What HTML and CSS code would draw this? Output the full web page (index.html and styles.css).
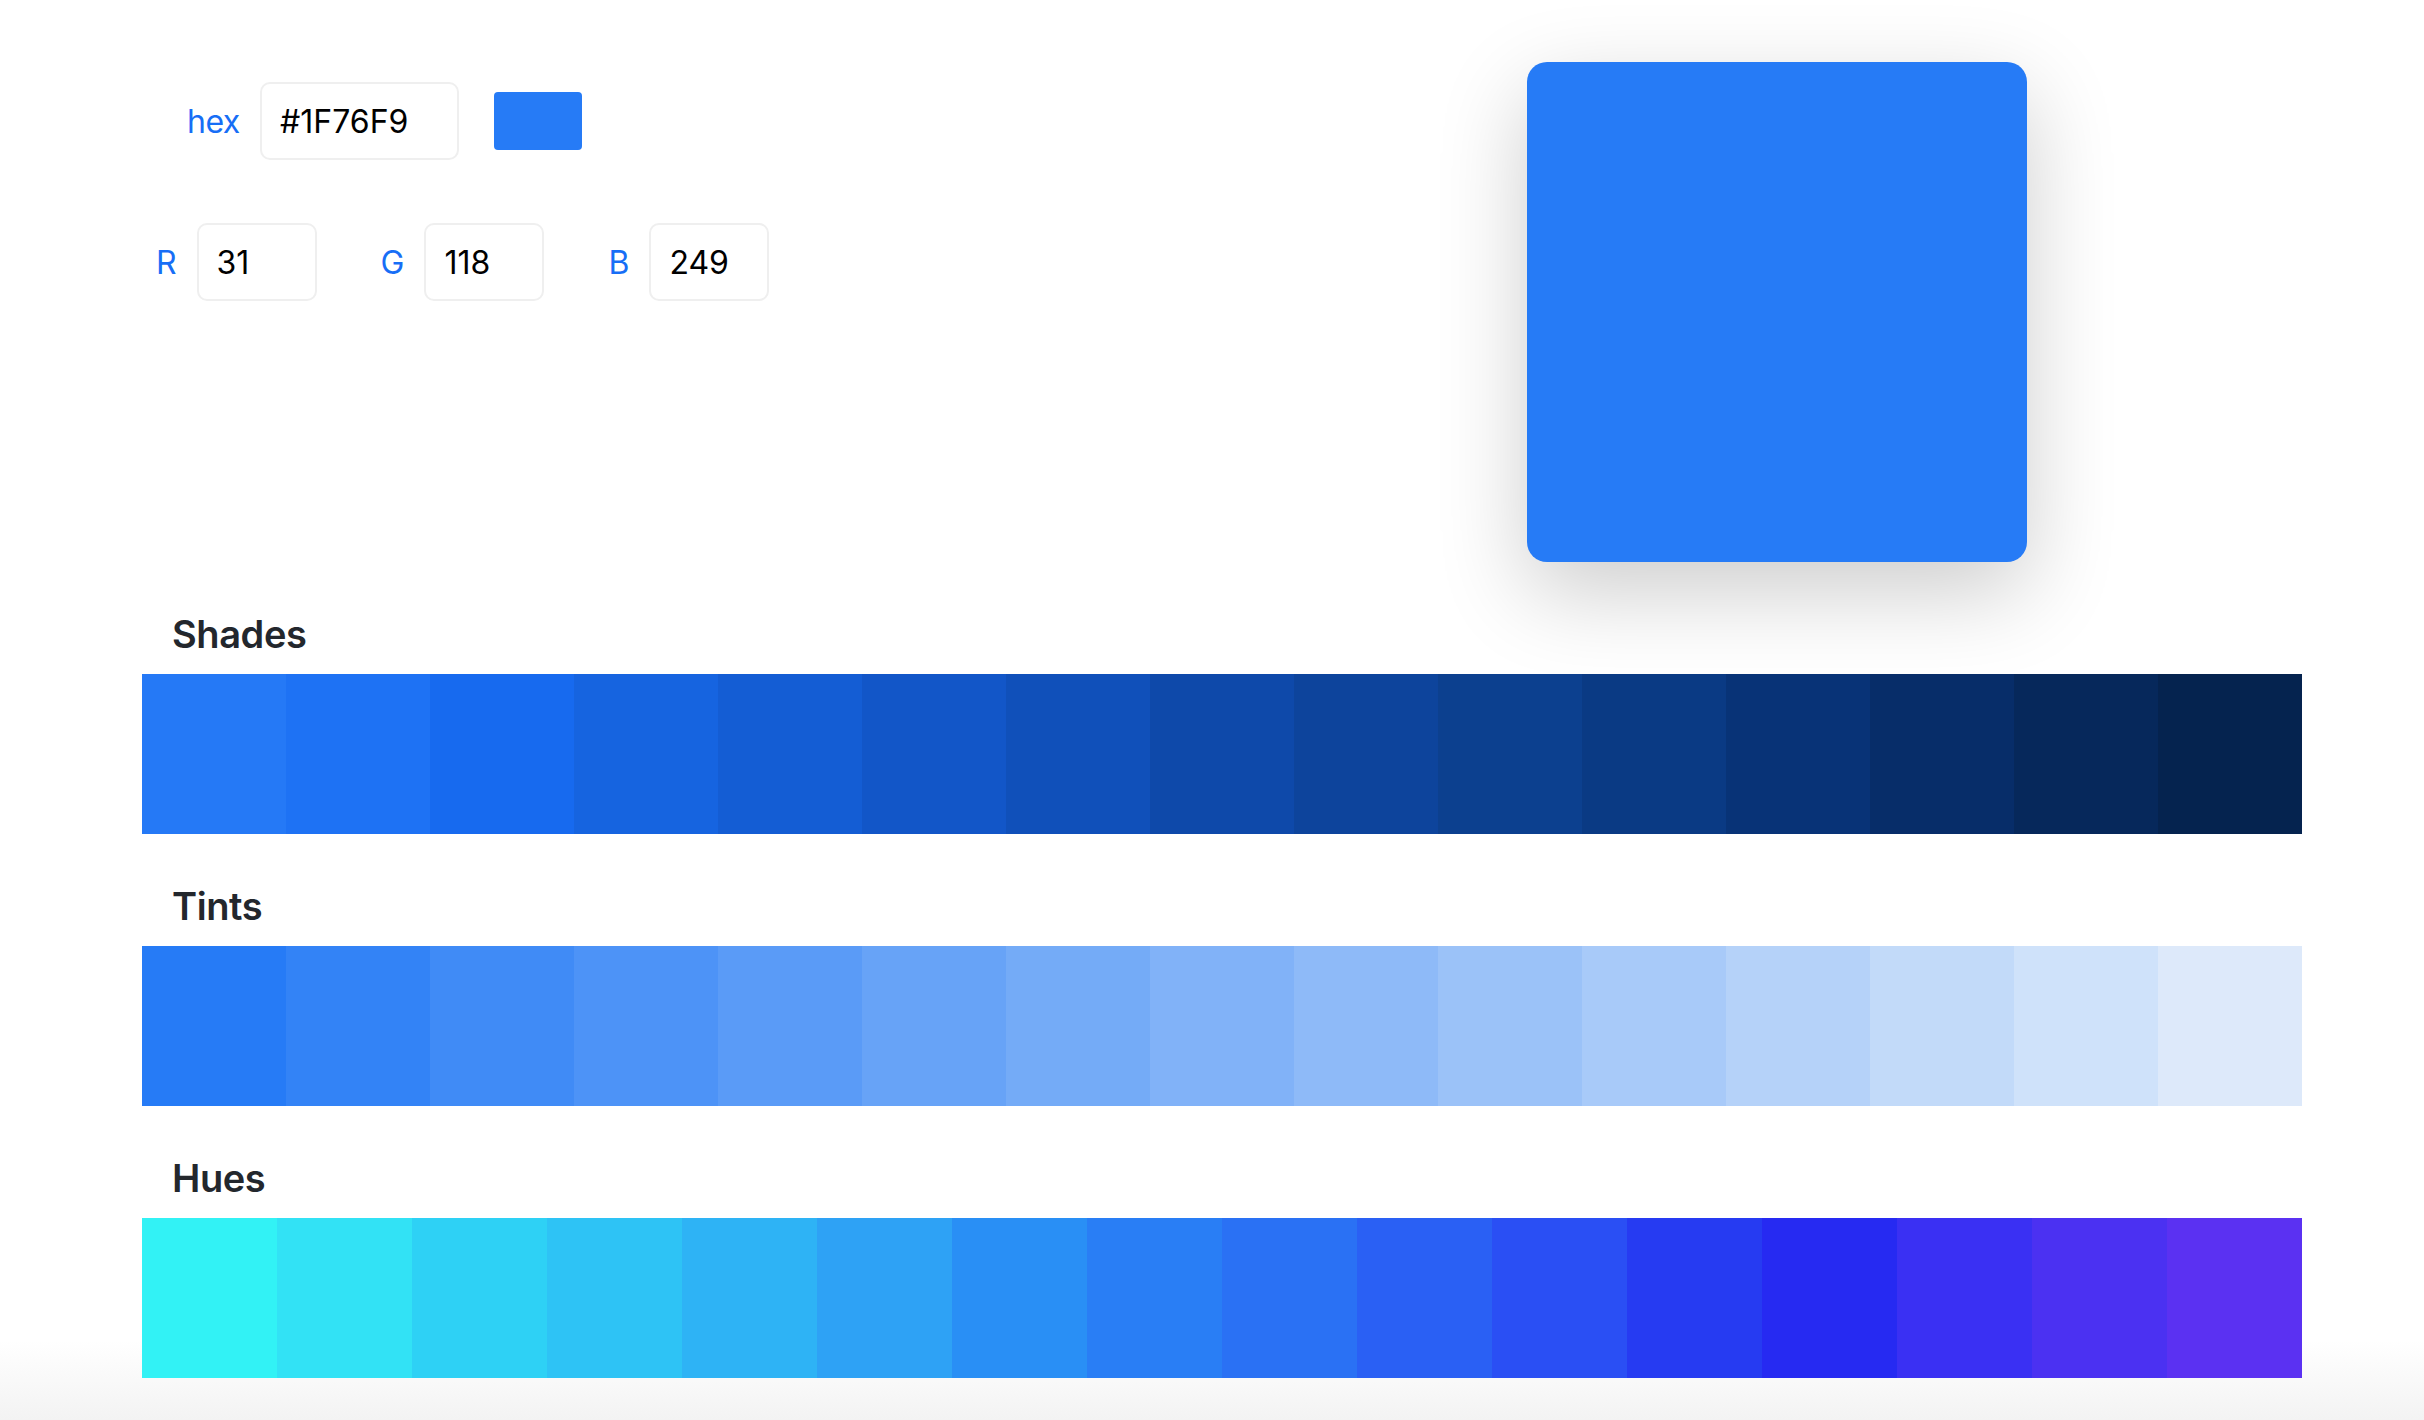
FILE: index.html
```html
<!DOCTYPE html>
<html lang="en">
<head>
<meta charset="utf-8">
<title>Color palette</title>
<link rel="stylesheet" href="styles.css">
</head>
<body>
<div class="page">
  <div class="top">
    <div class="controls">
      <div class="hex-row">
        <label class="lbl lbl-hex" for="hex">hex</label>
        <input class="field field-hex" id="hex" value="#1F76F9">
        <div class="chip"></div>
      </div>
      <div class="rgb-row">
        <div class="grp"><label class="lbl" for="r">R</label><input class="field field-num" id="r" value="31"></div>
        <div class="grp"><label class="lbl" for="g">G</label><input class="field field-num" id="g" value="118"></div>
        <div class="grp"><label class="lbl" for="b">B</label><input class="field field-num" id="b" value="249"></div>
      </div>
    </div>
    <div class="preview"></div>
  </div>

  <section class="palette">
    <h3 class="palette-title">Shades</h3>
    <div class="strip">
      <div class="cell" style="background:#2579f6"></div>
      <div class="cell" style="background:#1e72f4"></div>
      <div class="cell" style="background:#176aef"></div>
      <div class="cell" style="background:#1664e0"></div>
      <div class="cell" style="background:#145dd4"></div>
      <div class="cell" style="background:#1256c8"></div>
      <div class="cell" style="background:#1050ba"></div>
      <div class="cell" style="background:#0e49aa"></div>
      <div class="cell" style="background:#0d449c"></div>
      <div class="cell" style="background:#0c408f"></div>
      <div class="cell" style="background:#0a3a84"></div>
      <div class="cell" style="background:#083377"></div>
      <div class="cell" style="background:#072d69"></div>
      <div class="cell" style="background:#06285b"></div>
      <div class="cell" style="background:#05234f"></div>
    </div>
  </section>

  <section class="palette">
    <h3 class="palette-title">Tints</h3>
    <div class="strip">
      <div class="cell" style="background:rgb(38,123,246)"></div>
      <div class="cell" style="background:rgb(51,131,246)"></div>
      <div class="cell" style="background:rgb(64,139,246)"></div>
      <div class="cell" style="background:rgb(77,147,247)"></div>
      <div class="cell" style="background:rgb(90,155,247)"></div>
      <div class="cell" style="background:rgb(103,163,247)"></div>
      <div class="cell" style="background:rgb(116,171,247)"></div>
      <div class="cell" style="background:rgb(129,178,248)"></div>
      <div class="cell" style="background:rgb(142,186,248)"></div>
      <div class="cell" style="background:rgb(155,194,248)"></div>
      <div class="cell" style="background:rgb(168,202,249)"></div>
      <div class="cell" style="background:rgb(181,210,249)"></div>
      <div class="cell" style="background:rgb(194,218,249)"></div>
      <div class="cell" style="background:rgb(207,226,250)"></div>
      <div class="cell" style="background:rgb(221,233,250)"></div>
    </div>
  </section>

  <section class="palette">
    <h3 class="palette-title">Hues</h3>
    <div class="strip">
      <div class="cell" style="background:hsl(181,91%,58%)"></div>
      <div class="cell" style="background:hsl(186,91%,58%)"></div>
      <div class="cell" style="background:hsl(191,91%,57%)"></div>
      <div class="cell" style="background:hsl(195,91%,57%)"></div>
      <div class="cell" style="background:hsl(200,91%,57%)"></div>
      <div class="cell" style="background:hsl(205,91%,57%)"></div>
      <div class="cell" style="background:hsl(210,91%,56%)"></div>
      <div class="cell" style="background:hsl(215,91%,56%)"></div>
      <div class="cell" style="background:hsl(219,90%,56%)"></div>
      <div class="cell" style="background:hsl(224,90%,56%)"></div>
      <div class="cell" style="background:hsl(229,90%,56%)"></div>
      <div class="cell" style="background:hsl(234,89%,55%)"></div>
      <div class="cell" style="background:hsl(239,89%,55%)"></div>
      <div class="cell" style="background:hsl(243,89%,57%)"></div>
      <div class="cell" style="background:hsl(248,88%,57%)"></div>
      <div class="cell" style="background:hsl(253,88%,57%)"></div>
    </div>
  </section>
</div>
</body>
</html>
```

FILE: styles.css
```css
* {
  box-sizing: border-box;
}

html,
body {
  margin: 0;
  padding: 0;
}

body {
  font-family: Inter, "Noto Sans", sans-serif;
  color: #000;
  background: #fff;
}

.page {
  min-height: 100vh;
  padding: 62px 122px 0 142px;
  background: linear-gradient(to bottom, #fff 0, #fff calc(100% - 80px), #f3f3f3 100%);
}

.top {
  display: flex;
  align-items: flex-start;
  margin-bottom: 1px;
}

.controls {
  flex: 1;
  padding-top: 20px;
  display: flex;
  flex-direction: column;
  gap: 63px;
}

.hex-row {
  display: flex;
  align-items: center;
  margin-left: 45px;
}

.lbl {
  font-size: 32px;
  color: #176ef6;
}

.lbl-hex {
  width: 50px;
  margin-right: 23px;
  letter-spacing: -0.5px;
}

.field {
  height: 78px;
  border: 2px solid #efefef;
  border-radius: 10px;
  padding: 0 18px;
  font-family: Inter, "Noto Sans", sans-serif;
  font-size: 32px;
  color: #000;
  background: #fff;
  outline: none;
}

.field-hex {
  width: 199px;
}

.field-num {
  width: 120px;
}

.chip {
  width: 88px;
  height: 58px;
  margin-left: 35px;
  border-radius: 4px;
  background: #267bf6;
}

.rgb-row {
  display: flex;
  gap: 64px;
  margin-left: 14px;
}

.grp {
  display: flex;
  align-items: center;
  gap: 20px;
}

.preview {
  width: 500px;
  height: 500px;
  margin-right: 275px;
  border-radius: 20px;
  background: #267bf6;
  box-shadow: 0 30px 90px rgba(0, 0, 0, 0.2);
}

.palette-title {
  margin: 49px 0 17px;
  padding-left: 30px;
  font-size: 38px;
  line-height: 46px;
  font-weight: 600;
  letter-spacing: -0.4px;
  color: #23272d;
}

.strip {
  display: flex;
  height: 160px;
}

.cell {
  flex: 1;
}
```
